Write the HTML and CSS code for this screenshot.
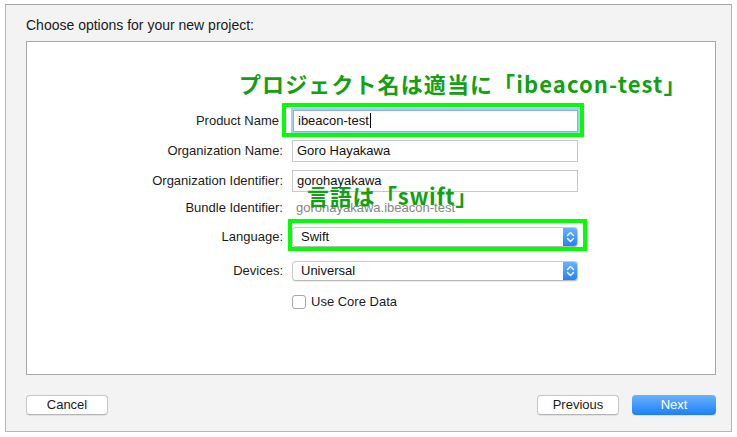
FILE: index.html
```html
<!DOCTYPE html>
<html lang="ja">
<head>
<meta charset="utf-8">
<title>Choose options</title>
<link rel="stylesheet" href="styles.css">
</head>
<body>
<div class="panel">
  <div class="title">Choose options for your new project:</div>
  <div class="box">
    <div class="note note-name">プロジェクト名は適当に「ibeacon-test」</div>
    <div class="form">
      <div class="label label-nocolon">Product Name</div>
      <div class="field focus"><span class="caret">ibeacon-test</span></div>

      <div class="label">Organization Name:</div>
      <div class="field">Goro Hayakawa</div>

      <div class="label">Organization Identifier:</div>
      <div class="field">gorohayakawa</div>

      <div class="label">Bundle Identifier:</div>
      <div class="static">gorohayakawa.ibeacon-test</div>

      <div class="label">Language:</div>
      <div class="popup"><span class="popup-text">Swift</span><span class="stepper"><svg width="15" height="20" viewBox="0 0 15 20"><path d="M4.5 8.5 L7.5 5.5 L10.5 8.5 M4.5 11.5 L7.5 14.5 L10.5 11.5" fill="none" stroke="#fff" stroke-width="1.4" stroke-linecap="round" stroke-linejoin="round"/></svg></span></div>

      <div class="label">Devices:</div>
      <div class="popup"><span class="popup-text">Universal</span><span class="stepper"><svg width="15" height="20" viewBox="0 0 15 20"><path d="M4.5 8.5 L7.5 5.5 L10.5 8.5 M4.5 11.5 L7.5 14.5 L10.5 11.5" fill="none" stroke="#fff" stroke-width="1.4" stroke-linecap="round" stroke-linejoin="round"/></svg></span></div>

      <div class="label"></div>
      <label class="check"><span class="checkbox"></span>Use Core Data</label>
    </div>
    <div class="note note-lang">言語は「swift」</div>
    <div class="hl hl-name"></div>
    <div class="hl hl-lang"></div>
  </div>
  <div class="buttons">
    <div class="btn">Cancel</div>
    <div class="spacer"></div>
    <div class="btn">Previous</div>
    <div class="btn btn-primary">Next</div>
  </div>
</div>
</body>
</html>
```

FILE: styles.css
```css
html, body {
  margin: 0;
  padding: 0;
  background: #ffffff;
}
body {
  font-family: "Liberation Sans", Arial, sans-serif;
  font-size: 13px;
  color: #1c1c1c;
}
.panel {
  box-sizing: border-box;
  margin: 4px 0 0 5px;
  width: 727px;
  height: 428px;
  background: #f3f3f3;
  border: 1px solid #b6b6b6;
  border-top-color: #a3a3a3;
  padding: 12px 15px 16px 20px;
  display: flex;
  flex-direction: column;
}
.title {
  font-size: 14px;
  line-height: 16px;
  height: 16px;
  color: #1a1a1a;
}
.box {
  position: relative;
  margin-top: 8px;
  flex: 1;
  background: #ffffff;
  border: 1px solid #a8a8a8;
  box-sizing: border-box;
}
.form {
  display: grid;
  grid-template-columns: 256px 286px;
  column-gap: 9px;
  grid-template-rows: 30px 30px 30px 24px 33px 36px 26px;
  align-items: center;
  padding-top: 64px;
}
.label {
  text-align: right;
  line-height: 16px;
  color: #1c1c1c;
}
.label-nocolon {
  padding-right: 4px;
}
.field {
  box-sizing: border-box;
  height: 22px;
  border: 1px solid #c8c8c8;
  background: #fff;
  padding: 0 4px;
  line-height: 20px;
  color: #111;
}
.field.focus {
  border-color: #86aef0;
  box-shadow: 0 0 0 2px #a9ccf7;
  margin-left: 1px;
  width: 285px;
}
.caret {
  border-right: 1px solid #000;
  padding-right: 1px;
}
.static {
  color: #858585;
  padding-left: 4px;
  line-height: 16px;
}
.popup {
  box-sizing: border-box;
  height: 20px;
  border: 1px solid #c9c9c9;
  border-bottom-color: #b8b8b8;
  border-radius: 4px;
  background: #fff;
  display: flex;
  align-items: stretch;
  overflow: hidden;
  box-shadow: 0 0.5px 1px rgba(0,0,0,0.08);
}
.popup-text {
  flex: 1;
  padding-left: 8px;
  line-height: 18px;
  color: #111;
}
.stepper {
  width: 15px;
  margin: -1px -1px -1px 0;
  background: linear-gradient(#6db5fb, #1e80f6);
  display: flex;
  align-items: center;
  justify-content: center;
}
.stepper svg {
  display: block;
}
.check {
  display: flex;
  align-items: center;
  gap: 5px;
  color: #1c1c1c;
  line-height: 16px;
}
.checkbox {
  box-sizing: border-box;
  width: 14px;
  height: 14px;
  border: 1px solid #a9a9a9;
  border-radius: 3px;
  background: #fff;
}
.note {
  position: absolute;
  font-family: "Noto Sans CJK JP", sans-serif;
  font-weight: 700;
  font-size: 22px;
  line-height: 22px;
  color: #13a013;
  white-space: nowrap;
}
.note-name {
  left: 212px;
  top: 30px;
  letter-spacing: 1.1px;
}
.note-lang {
  left: 280px;
  top: 142px;
  letter-spacing: 0.7px;
}
.hl {
  position: absolute;
  box-sizing: border-box;
  border: 4px solid #00ff00;
}
.hl-name {
  left: 255px;
  top: 61px;
  width: 302px;
  height: 34px;
}
.hl-lang {
  left: 261px;
  top: 177px;
  width: 299px;
  height: 32px;
}
.buttons {
  display: flex;
  margin-top: 20px;
  height: 20px;
  gap: 13px;
}
.spacer {
  flex: 1;
}
.btn {
  box-sizing: border-box;
  width: 82px;
  height: 20px;
  border: 1px solid #c8c8c8;
  border-bottom-color: #b5b5b5;
  border-radius: 4px;
  background: #ffffff;
  text-align: center;
  line-height: 18px;
  color: #1a1a1a;
  box-shadow: 0 0.5px 1px rgba(0,0,0,0.08);
}
.btn-primary {
  width: 84px;
  border: none;
  line-height: 20px;
  color: #ffffff;
  background: linear-gradient(#6ab2fb, #1a80f7);
}
```
